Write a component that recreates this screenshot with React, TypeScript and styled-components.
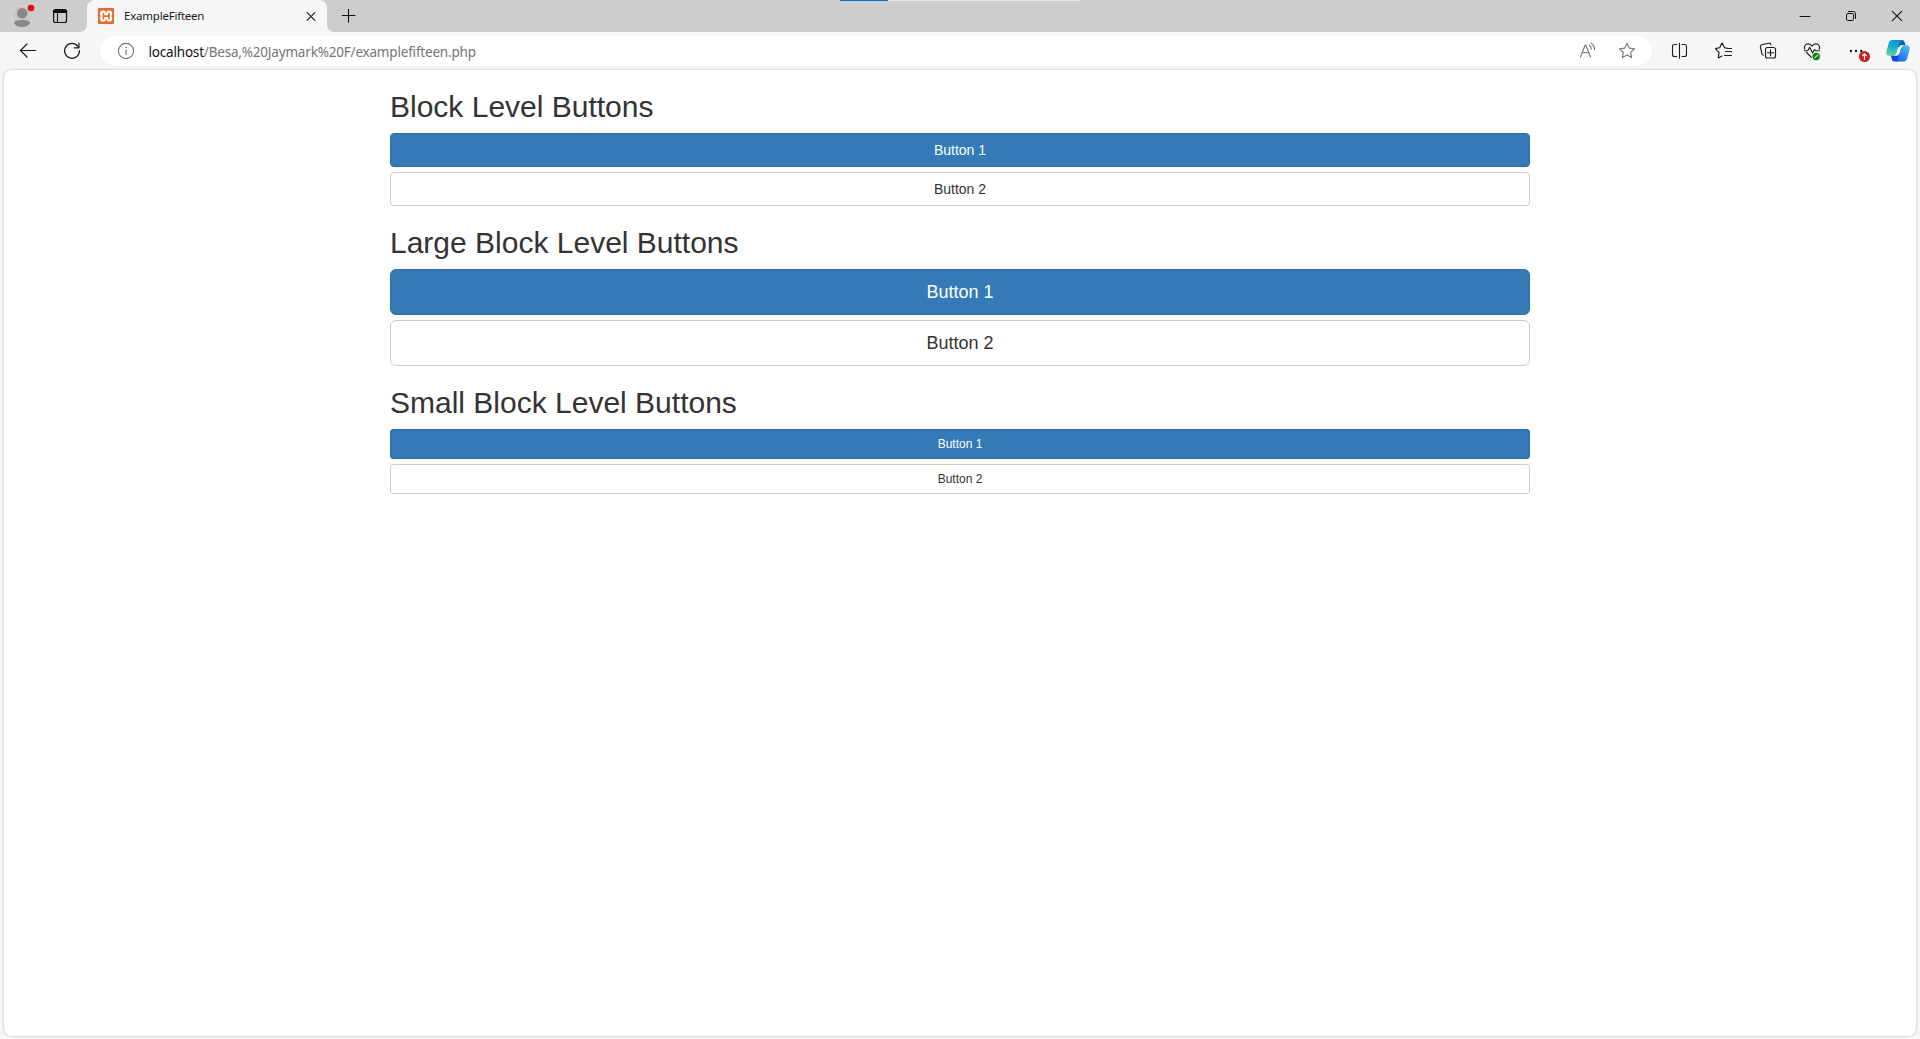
import React from "react";
import styled, { createGlobalStyle } from "styled-components";

const GlobalStyle = createGlobalStyle`
  *, *::before, *::after { box-sizing: border-box; }
  html, body { margin: 0; padding: 0; }
  body { background: #f7f7f7; overflow: hidden; }
`;

const Window = styled.div`
  display: flex;
  flex-direction: column;
  height: 1039px;
  background: #f7f7f7;
  font-family: "Noto Sans", "Open Sans", sans-serif;
`;

const TabStrip = styled.header`
  position: relative;
  display: flex;
  align-items: center;
  height: 32px;
  flex: none;
  background: #cdcdcd;
`;

const ShareBar = styled.div`
  position: absolute;
  top: 0;
  left: 840px;
  width: 241px;
  height: 1px;
  background: linear-gradient(to right, #0078d4 48px, #e6e6e6 48px);
`;

const Slot = styled.button<{ $width: number }>`
  display: flex;
  flex: none;
  align-items: center;
  justify-content: center;
  width: ${(p) => p.$width}px;
  height: 32px;
  padding: 0;
  border: 0;
  background: none;
`;

const Glyph = styled.svg`
  display: block;
  flex: none;
  width: 24px;
  height: 24px;
  overflow: visible;
  fill: none;
  stroke-linecap: round;
  stroke-linejoin: round;
`;

const Tab = styled.div`
  position: relative;
  display: flex;
  align-items: center;
  width: 240px;
  height: 32px;
  margin-left: 11px;
  padding: 0 4px 0 7px;
  border-radius: 8px 8px 0 0;
  background: #f7f7f7;

  &::before, &::after {
    content: "";
    position: absolute;
    bottom: 0;
    width: 7px;
    height: 7px;
  }
  &::before {
    left: -7px;
    background: radial-gradient(circle at 0 0, transparent 6.5px, #f7f7f7 7.2px);
  }
  &::after {
    right: -7px;
    background: radial-gradient(circle at 100% 0, transparent 6.5px, #f7f7f7 7.2px);
  }
`;

const TabTitle = styled.span`
  flex: 1;
  margin-left: 6px;
  font-size: 11.5px;
  line-height: 16px;
  letter-spacing: -0.22px;
  color: #1b1b1b;
  white-space: nowrap;
`;

const WindowControls = styled.div`
  display: flex;
  margin-left: auto;
`;

const Toolbar = styled.nav`
  display: flex;
  align-items: center;
  height: 38px;
  flex: none;
  padding-right: 2px;
`;

const AddressBar = styled.div`
  display: flex;
  align-items: center;
  flex: 1;
  height: 30px;
  margin: 0 6px 0 12px;
  padding: 0 13px 0 14px;
  border-radius: 15px;
  background: #fff;
  box-shadow: 0 0 3px rgba(0, 0, 0, 0.05);
`;

const Url = styled.span`
  flex: 1;
  margin-left: 10.5px;
  padding-top: 1px;
  font-size: 13.5px;
  line-height: 20px;
  letter-spacing: -0.19px;
  color: #757575;
  white-space: nowrap;
`;

const Host = styled.span`
  color: #111;
`;

const AddressActions = styled.div`
  display: flex;
  gap: 15px;
`;

const Page = styled.main`
  flex: 1;
  margin: 0 4px 3px;
  border-radius: 8px;
  background: #fff;
  box-shadow: 0 0 3px rgba(0, 0, 0, 0.26);
  font-family: "Liberation Sans", Arial, sans-serif;
  color: #333;
`;

const Container = styled.div`
  width: 1170px;
  margin: 0 auto;
  padding: 0 15px;
  display: flow-root;
`;

const Heading = styled.h2`
  margin: 20px 0 10px;
  font-size: 30px;
  font-weight: 500;
  line-height: 33px;
`;

type Size = "md" | "lg" | "sm";

const metrics: Record<Size, string> = {
  md: "height: 34px; padding: 6px 12px; font-size: 14px; line-height: 20px; border-radius: 4px;",
  lg: "height: 46px; padding: 10px 16px; font-size: 18px; line-height: 24px; border-radius: 6px;",
  sm: "height: 30px; padding: 5px 10px; font-size: 12px; line-height: 18px; border-radius: 3px;",
};

const BlockButton = styled.button<{ $size: Size; $primary?: boolean }>`
  display: block;
  width: 100%;
  margin: 0;
  font-family: inherit;
  text-align: center;
  color: ${(p) => (p.$primary ? "#fff" : "#333")};
  background: ${(p) => (p.$primary ? "#337ab7" : "#fff")};
  border: 1px solid ${(p) => (p.$primary ? "#2e6da4" : "#ccc")};
  ${(p) => metrics[p.$size]}

  & + & { margin-top: 5px; }
`;

const STAR =
  "M12 4.3l2.25 4.8 5.25.65-3.85 3.6 1 5.2L12 16l-4.65 2.55 1-5.2L4.5 9.75l5.25-.65z";

const Avatar = () => (
  <Glyph viewBox="0 0 24 24">
    <circle cx="12" cy="12" r="10.4" fill="#c9c7c4" stroke="#dedbd6" strokeWidth=".8" />
    <circle cx="12.2" cy="9.3" r="5.2" fill="#8a8886" />
    <path d="M4 19.2c0-2.2 3-3.2 8-3.2s8 1 8 3.2c-1.4 2.4-4.4 3.8-8 3.8s-6.600-1.400-8-3.800z" fill="#8a8886" />
    <circle cx="21" cy="4" r="3.3" fill="#e50b17" />
  </Glyph>
);

const WorkspaceIcon = () => (
  <Glyph viewBox="0 0 24 24" stroke="#111">
    <rect x="5.6" y="5.600" width="12.900" height="12.900" rx="2" strokeWidth="1.2" />
    <path d="M5.500 9V7.500a2 2 0 0 1 2-2h9a2 2 0 0 1 2 2V9z" fill="#111" stroke="none" />
    <path d="M6 7.600h12" strokeWidth="2.600" />
    <path d="M9.500 9v9" strokeWidth="1.100" />
  </Glyph>
);

const Favicon = () => (
  <Glyph viewBox="0 0 24 24">
    <rect x="4" y="4" width="16" height="16" rx="1.200" fill="#e8702a" />
    <rect x="4.400" y="4.400" width="15.200" height="15.200" rx="1" stroke="#c9703a" strokeWidth=".8" />
    <path
      d="M9 6.600c1.300 0 2.300.5 3.100 1.300.8-.8 1.800-1.300 3.100-1.300 1.900 0 3.100 1.200 3.100 2.900 0 1-.4 1.800-.9 2.500.5.700.9 1.500.9 2.500 0 1.900-1.200 3.100-3.100 3.100-1.300 0-2.300-.5-3.100-1.300-.8.800-1.800 1.300-3.100 1.300-1.900 0-3-1.200-3-3.100 0-1 .3-1.800.8-2.500-.5-.7-.8-1.500-.8-2.500 0-1.700 1.100-2.900 3-2.900z"
      fill="#fff"
    />
    <path d="M9.400 9.500v5.200M14.900 9.500v5.200M9.400 12.100h5.500" stroke="#e8702a" strokeWidth="1.700" />
    <path d="M12.100 6.500v2.200M12.100 15.600v2.300" stroke="#e8702a" strokeWidth="1.100" strokeLinecap="butt" />
  </Glyph>
);

const TabCloseIcon = () => (
  <Glyph viewBox="0 0 24 24" stroke="#222" strokeWidth="1.200">
    <path d="M8.200 8.700l7.600 7.600M15.800 8.700l-7.600 7.600" />
  </Glyph>
);

const PlusIcon = () => (
  <Glyph viewBox="0 0 24 24" stroke="#111" strokeWidth="1.100">
    <path d="M11.500 5.300v13M5.300 11.500h12.700" />
  </Glyph>
);

const MinimizeIcon = () => (
  <Glyph viewBox="0 0 24 24" stroke="#111" strokeLinecap="butt">
    <path d="M7 12.500h10" />
  </Glyph>
);

const RestoreIcon = () => (
  <Glyph viewBox="0 0 24 24" stroke="#111">
    <rect x="7.500" y="9.500" width="7" height="7" rx="1.300" />
    <path d="M9.500 7.500h4.700a2.300 2.300 0 0 1 2.300 2.300v4.700" />
  </Glyph>
);

const WindowCloseIcon = () => (
  <Glyph viewBox="0 0 24 24" stroke="#111" strokeWidth="1.100">
    <path d="M7.300 7.300l9.400 9.400M16.700 7.300l-9.400 9.400" />
  </Glyph>
);

const BackIcon = () => (
  <Glyph viewBox="0 0 24 24" stroke="#1b1b1b" strokeWidth="1.200">
    <path d="M19.500 11.500H4.500M11 5l-6.500 6.500L11 18" />
  </Glyph>
);

const ReloadIcon = () => (
  <Glyph viewBox="0 0 24 24" stroke="#1b1b1b" strokeWidth="1.200">
    <path d="M19.400 11.500a7.400 7.400 0 1 1-1.400-4L18.800 8.600M19 4.200v4.600h-4.800" />
  </Glyph>
);

const InfoIcon = () => (
  <Glyph viewBox="0 0 24 24" stroke="#737373" strokeWidth="1.100">
    <circle cx="12" cy="12" r="7.600" />
    <path d="M12 11v4.500" strokeWidth="1.200" />
    <circle cx="12" cy="8.400" r=".45" fill="#737373" strokeWidth=".7" />
  </Glyph>
);

const ReadAloudIcon = () => (
  <Glyph viewBox="0 0 24 24" stroke="#757575" strokeWidth="1.100">
    <path d="M4.500 17.800L9.200 6h.6l4.700 11.800M6.200 13.700h6.600M13.300 6.300c1.300.8 2 2.100 2 3.800M15 4.300c2.400 1.300 3.600 3.300 3.600 6.200" />
  </Glyph>
);

const StarIcon = () => (
  <Glyph viewBox="0 0 24 24" stroke="#757575" strokeWidth="1.100">
    <path d={STAR} />
  </Glyph>
);

const SplitIcon = () => (
  <Glyph viewBox="0 0 24 24" stroke="#1b1b1b" strokeWidth="1.100">
    <path d="M8.800 5.500H6.500a2 2 0 0 0-2 2v8a2 2 0 0 0 2 2h2.300M14 5.500h2.500a2 2 0 0 1 2 2v8a2 2 0 0 1-2 2H14M11.500 4.200v15" />
  </Glyph>
);

const FavoritesIcon = () => (
  <Glyph viewBox="0 0 24 24" stroke="#1b1b1b" strokeWidth="1.150">
    <path d="M15.500 9.200l-3-.4-2-4.300q-.4-.7-.8 0L7.700 8.800l-3.600.6q-.7.2-.2.800l3.200 3.200-.8 5q0 .6.6.4l2.900-1.700M14.800 9.500h4.700M13.500 12.500h6M12.500 16.500h7" />
  </Glyph>
);

const CollectionsIcon = () => (
  <Glyph viewBox="0 0 24 24" stroke="#1b1b1b" strokeWidth="1.150">
    <path d="M7.300 16.200a2 2 0 0 1-1.400-1.600L4.400 8.200a2 2 0 0 1 1.500-2.400l6.800-1.600a2 2 0 0 1 2.300 1.600" />
    <rect x="9.500" y="8.500" width="10" height="10.500" rx="2" />
    <path d="M14.500 10.800v6M11.500 13.700h6" />
  </Glyph>
);

const EssentialsIcon = () => (
  <Glyph viewBox="0 0 24 24" stroke="#1b1b1b" strokeWidth="1.100">
    <path d="M4.700 10.300C3.500 6.800 6.200 4.600 8.400 4.900c1.700.2 2.800 1.200 3.600 2.200.8-1 1.900-2 3.600-2.200 2.200-.3 4.900 1.900 3.700 5.400M6.500 13.500l5 5" />
    <path d="M4.500 11.700h3.200l2-3.400 2.800 5.600 1.900-3.300 1 1.100h4" />
    <circle cx="16.300" cy="17.500" r="4.100" fill="#107c10" stroke="#f7f7f7" strokeWidth=".7" />
    <path d="M14.900 18.700l2.800-2.500" stroke="#d9f0d9" strokeWidth="1.100" />
  </Glyph>
);

const MoreIcon = () => (
  <Glyph viewBox="0 0 24 24">
    <g fill="#1b1b1b">
      <circle cx="7" cy="12" r="1.200" />
      <circle cx="12" cy="12" r="1.200" />
      <circle cx="17.200" cy="12" r="1.200" />
    </g>
    <circle cx="20.500" cy="17.500" r="5.500" fill="#c4201f" />
    <path d="M20.500 20.400v-5.500M18.600 16.600l1.900-1.900 1.900 1.900" stroke="#fff" strokeWidth="1.200" />
  </Glyph>
);

const CopilotIcon = () => (
  <Glyph viewBox="0 0 24 24">
    <defs>
      <linearGradient id="cpLeft" x1="0.600" y1="0" x2="0.400" y2="1">
        <stop offset="0" stopColor="#0a93d6" />
        <stop offset=".4" stopColor="#12a8cf" />
        <stop offset="1" stopColor="#63d79a" />
      </linearGradient>
      <linearGradient id="cpRight" x1="0.800" y1="0" x2="0.300" y2="1">
        <stop offset="0" stopColor="#55bdf2" />
        <stop offset=".5" stopColor="#2f94f3" />
        <stop offset="1" stopColor="#1f62ea" />
      </linearGradient>
      <linearGradient id="cpTop" x1="0" y1="0" x2="1" y2="1">
        <stop offset="0" stopColor="#0a82c0" />
        <stop offset="1" stopColor="#0a4f86" />
      </linearGradient>
    </defs>
    <path d="M11 1h5.200c1.400 0 2 .8 2.400 2l.9 3.200h-3.300c-1.500 0-2.300.7-2.800 2L11 8z" fill="url(#cpTop)" />
    <path d="M4.500 15.500h5l3-2.500 1.500 3-2 6.500H8.500c-1.500 0-2.300-.8-2.700-2.200z" fill="#1746d1" />
    <path d="M17 6.300h3.800c2.500 0 3.400 1.800 2.800 4.100l-2.300 8.500c-.6 2.300-2 3.600-4.200 3.600H9.500c1.400-.3 2-1.300 2.400-2.800L14 11z" fill="url(#cpRight)" />
    <path d="M14.600 6.300h3.200c-1.600.1-2.400 1.100-2.900 2.700l-1.700 5.200c-.5 1.700-1.600 2.600-3.300 2.600H7.500z" fill="#fff" />
    <path d="M6.500 1H16c-1.500.3-2.200 1.400-2.600 2.800L10.600 13.500c-.6 2.200-1.600 3.300-3.700 3.300H3.200C.8 16.800-.1 15 .4 12.700L2.700 4C3.200 2.100 4.500 1 6.500 1z" fill="url(#cpLeft)" />
  </Glyph>
);

const sections: { title: string; size: Size }[] = [
  { title: "Block Level Buttons", size: "md" },
  { title: "Large Block Level Buttons", size: "lg" },
  { title: "Small Block Level Buttons", size: "sm" },
];

const toolbarActions = [
  { label: "Split screen", Icon: SplitIcon, width: 44 },
  { label: "Favorites", Icon: FavoritesIcon, width: 44 },
  { label: "Collections", Icon: CollectionsIcon, width: 44 },
  { label: "Browser essentials", Icon: EssentialsIcon, width: 44 },
  { label: "Settings and more", Icon: MoreIcon, width: 44 },
  { label: "Copilot", Icon: CopilotIcon, width: 40 },
];

export default function App() {
  return (
    <Window>
      <GlobalStyle />
      <TabStrip>
        <ShareBar />
        <Slot $width={44} aria-label="Profile"><Avatar /></Slot>
        <Slot $width={32} aria-label="Workspaces"><WorkspaceIcon /></Slot>
        <Tab>
          <Favicon />
          <TabTitle>ExampleFifteen</TabTitle>
          <Slot $width={24} aria-label="Close tab"><TabCloseIcon /></Slot>
        </Tab>
        <Slot $width={44} aria-label="New tab"><PlusIcon /></Slot>
        <WindowControls>
          <Slot $width={46} aria-label="Minimize"><MinimizeIcon /></Slot>
          <Slot $width={46} aria-label="Restore"><RestoreIcon /></Slot>
          <Slot $width={46} aria-label="Close"><WindowCloseIcon /></Slot>
        </WindowControls>
      </TabStrip>
      <Toolbar>
        <Slot $width={56} aria-label="Back"><BackIcon /></Slot>
        <Slot $width={32} aria-label="Refresh"><ReloadIcon /></Slot>
        <AddressBar>
          <InfoIcon />
          <Url><Host>localhost</Host>/Besa,%20Jaymark%20F/examplefifteen.php</Url>
          <AddressActions>
            <ReadAloudIcon />
            <StarIcon />
          </AddressActions>
        </AddressBar>
        {toolbarActions.map(({ label, Icon, width }) => (
          <Slot key={label} $width={width} aria-label={label}><Icon /></Slot>
        ))}
      </Toolbar>
      <Page>
        <Container>
          {sections.map(({ title, size }) => (
            <section key={title}>
              <Heading>{title}</Heading>
              <BlockButton $size={size} $primary>Button 1</BlockButton>
              <BlockButton $size={size}>Button 2</BlockButton>
            </section>
          ))}
        </Container>
      </Page>
    </Window>
  );
}
